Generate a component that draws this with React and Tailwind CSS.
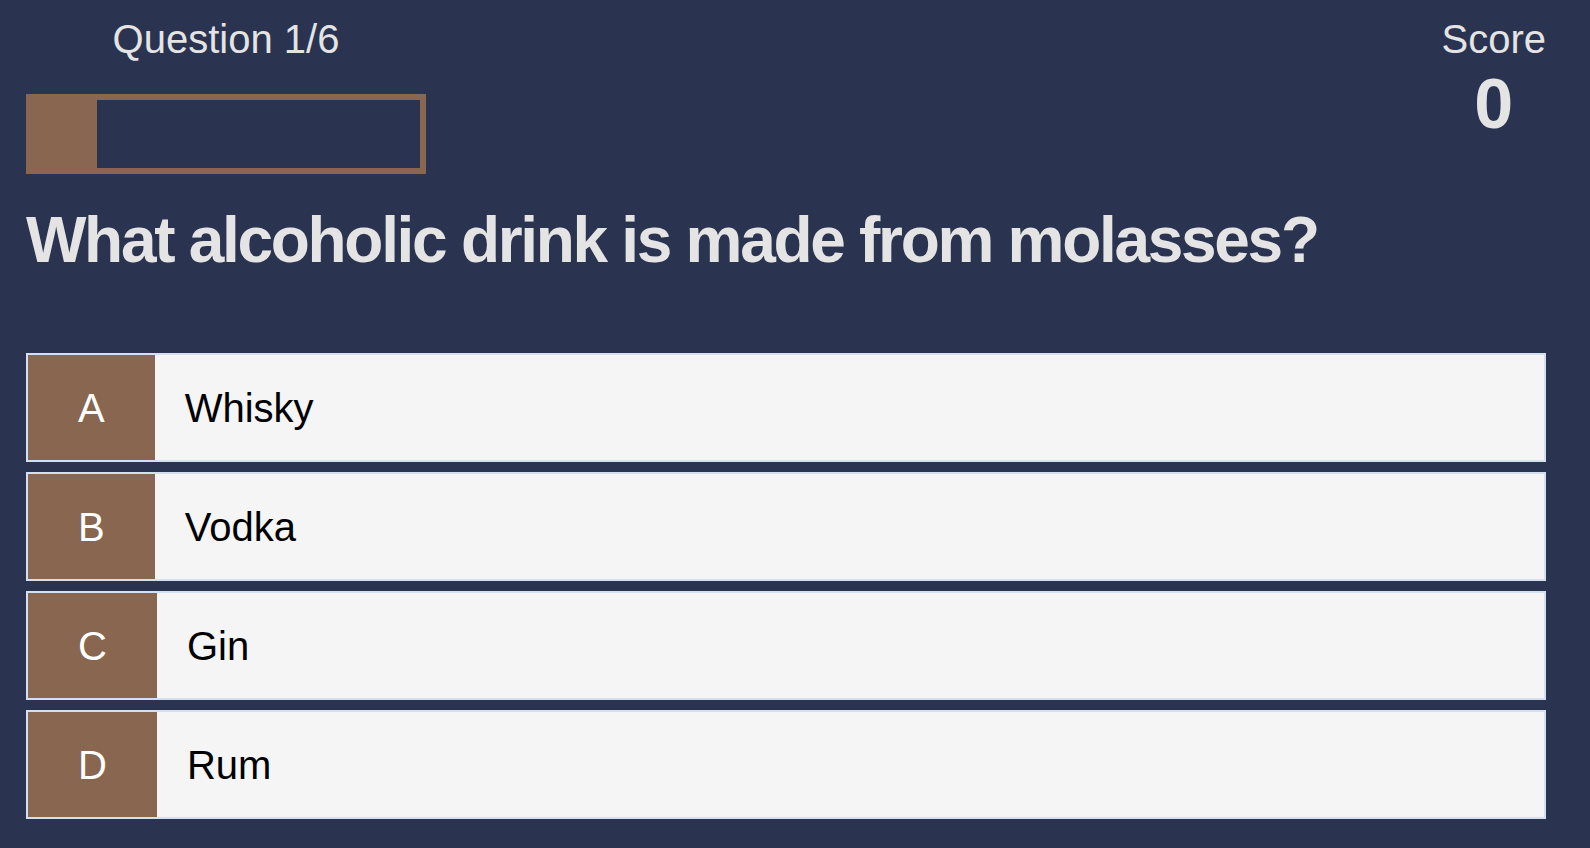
import React from 'react';

const question = {
  text: 'What alcoholic drink is made from molasses?',
  options: [
    ['A', 'Whisky'],
    ['B', 'Vodka'],
    ['C', 'Gin'],
    ['D', 'Rum'],
  ],
};

const App = () => {
  const current = 1, total = 6, score = 0;
  const progress = (current / total) * 100;

  return (
    <div className="min-h-screen bg-[#2a3350] pl-[26px] pt-[16px] font-['Liberation_Sans',Arial,sans-serif] text-[#e4e4e4]">
      <div className="w-[1520px]">
        <div className="flex justify-between">
          <div className="w-[400px]">
            <p className="text-center text-[40px] leading-[46px]">Question {current}/{total}</p>
            <div className="mt-[32px] h-[80px] border-[6px] border-[#88664f]">
              <div className="h-full bg-[#88664f]" style={{ width: `${progress}%` }} />
            </div>
          </div>
          <div className="text-center">
            <p className="text-[40px] leading-[46px]">Score</p>
            <p className="mt-[7px] text-[70px] font-bold leading-none">{score}</p>
          </div>
        </div>

        <h1 className="mt-[29px] text-[64px] font-bold leading-[74px] tracking-[-2.3px]">{question.text}</h1>

        <div className="mt-[76px] flex flex-col gap-[10px]">
          {question.options.map(([letter, label]) => (
            <div key={letter} className="flex h-[109px] border-2 border-[#d4dff0] bg-[#f5f5f5] text-[40px]">
              <div className="flex items-center bg-[#88664f] px-[50px] text-white">{letter}</div>
              <div className="flex items-center pl-[30px] text-black">{label}</div>
            </div>
          ))}
        </div>
      </div>
    </div>
  );
};

export default App;
